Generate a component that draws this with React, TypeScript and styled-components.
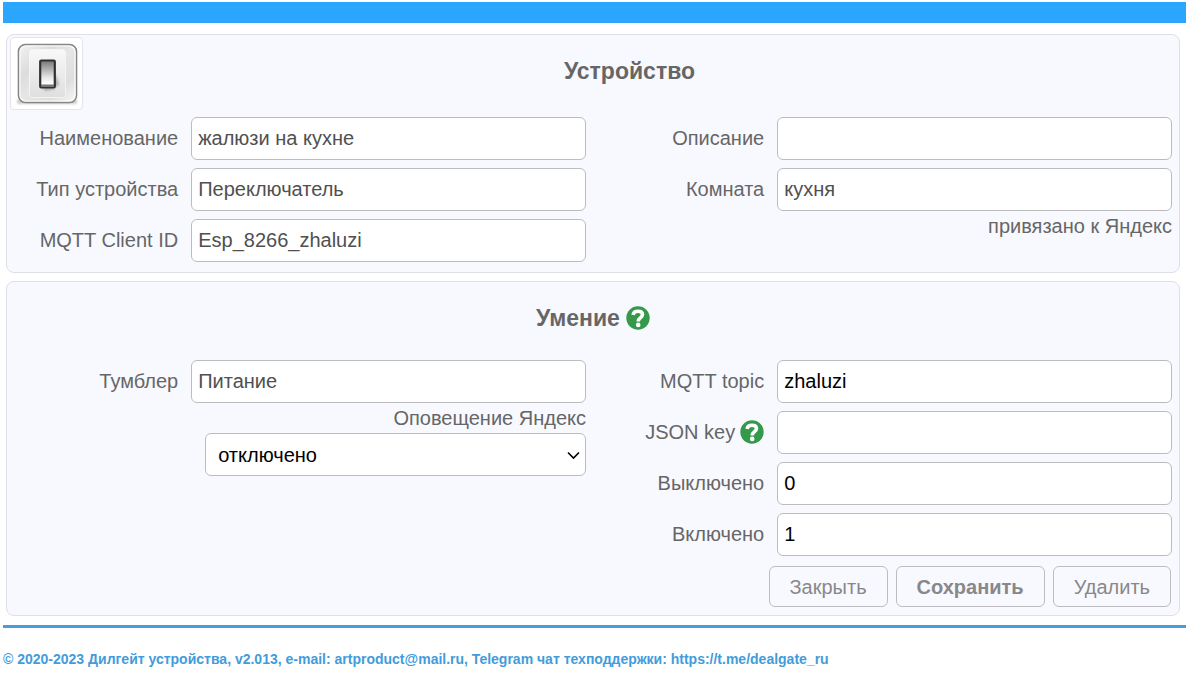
import React from "react";
import styled, { createGlobalStyle } from "styled-components";

const GlobalStyle = createGlobalStyle`
  *, *::before, *::after { box-sizing: border-box; }
  body {
    margin: 0;
    background: #fff;
    color: #666;
    font-family: "Liberation Sans", Arial, sans-serif;
    font-size: 20px;
    line-height: 24px;
  }
  input, select, button { font: inherit; }
`;

const Page = styled.div`
  padding: 2px 14px 0 3px;
`;

const TopBar = styled.header`
  height: 21px;
  background: #2ba6ff;
`;

const Main = styled.main`
  display: flex;
  flex-direction: column;
  gap: 8px;
  padding: 11px 6px 9px 3px;
  border-bottom: 3px solid #469fdc;
`;

const Panel = styled.section`
  border: 1px solid #dfdfe8;
  border-radius: 8px;
  background: #f8f9ff;
  padding-bottom: 8px;
`;

const DevicePanel = styled(Panel)`
  padding-bottom: 10px;
`;

const PanelHeader = styled.div`
  display: flex;
  align-items: flex-start;
  padding: 0 3px 6px;
`;

const Title = styled.h2`
  flex: 1;
  display: flex;
  align-items: center;
  justify-content: center;
  gap: 6px;
  margin: 0;
  font-size: 23px;
  line-height: 72px;
  font-weight: bold;
`;

const DeviceIcon = styled.div`
  width: 73px;
  height: 73px;
  margin: 2px 0 1px;
  border: 1px solid #e4e4ec;
  border-radius: 4px;
  background: #fff;
`;

const Columns = styled.div`
  display: grid;
  grid-template-columns: 1fr 1fr;
`;

const Column = styled.div`
  display: flex;
  flex-direction: column;
  padding: 0 7px 0 2px;
`;

const Fields = styled.div`
  display: grid;
  gap: 8px;
`;

const Row = styled.div`
  display: grid;
  grid-template-columns: 3fr 7fr;
  column-gap: 13px;
  align-items: center;
`;

const LabelCell = styled.div`
  display: flex;
  align-items: center;
  justify-content: flex-end;
  gap: 5px;
  padding-bottom: 2px;
  white-space: nowrap;
`;

const TextInput = styled.input`
  width: 100%;
  min-width: 0;
  height: 43px;
  padding: 0 6px;
  border: 1px solid #bcbcbf;
  border-radius: 6px;
  background: #fff;
  color: #000;
  &:read-only { color: #505050; }
`;

const Note = styled.div`
  line-height: 30px;
  text-align: right;
`;

const SelectBox = styled.div`
  position: relative;
  grid-column: 2;
  margin-left: 14px;
`;

const Select = styled.select`
  appearance: none;
  display: block;
  width: 100%;
  height: 43px;
  padding: 0 12px;
  border: 1px solid #bcbcbf;
  border-radius: 6px;
  background: #fff;
  color: #000;
`;

const Chevron = styled.svg`
  position: absolute;
  right: 6px;
  top: 18px;
  pointer-events: none;
`;

const HelpButton = styled.button`
  display: flex;
  padding: 0;
  border: 0;
  background: transparent;
`;

const Actions = styled.div`
  display: flex;
  justify-content: flex-end;
  gap: 8px;
  padding: 10px 1px 0 0;
`;

const ActionButton = styled.button<{ $strong?: boolean }>`
  height: 41px;
  padding: 0 20px;
  border: 1px solid #bcbcc2;
  border-radius: 6px;
  background: transparent;
  color: #888;
  font-weight: ${(p) => (p.$strong ? "bold" : "normal")};
`;

const Footer = styled.footer`
  padding-top: 19px;
  color: #419cdc;
  font-size: 14px;
  font-weight: bold;
  a { color: inherit; text-decoration: none; }
`;

function Help({ label }: { label: string }) {
  return (
    <HelpButton type="button" aria-label={label}>
      <svg width="24" height="24" viewBox="0 0 24 24" aria-hidden="true">
        <circle cx="12" cy="12" r="11.7" fill="#34994a" />
        <path
          d="M7.2 9 C7.4 6.3 9.2 5.2 12 5.2 C14.9 5.2 16.5 6.5 16.5 8.6 C16.5 11.6 12.2 11.6 12.2 15.4"
          fill="none"
          stroke="#fff"
          strokeWidth="3.6"
        />
        <circle cx="12.2" cy="18.9" r="2.3" fill="#fff" />
      </svg>
    </HelpButton>
  );
}

function Field({ id, label, value = "", readOnly, help }: {
  id: string;
  label: string;
  value?: string;
  readOnly?: boolean;
  help?: boolean;
}) {
  return (
    <Row>
      <LabelCell>
        <label htmlFor={id}>{label}</label>
        {help && <Help label="Справка" />}
      </LabelCell>
      <TextInput id={id} defaultValue={value} readOnly={readOnly} />
    </Row>
  );
}

function SwitchDrawing() {
  return (
    <svg width="71" height="71" viewBox="0 0 71 71" aria-hidden="true">
      <defs>
        <linearGradient id="plate" x1="0" y1="0" x2="1" y2="1">
          <stop offset="0" stopColor="#f4f4f4" />
          <stop offset=".3" stopColor="#dcdcdc" />
          <stop offset=".5" stopColor="#e6e6e6" />
          <stop offset=".75" stopColor="#dedede" />
          <stop offset="1" stopColor="#fafafa" />
        </linearGradient>
        <linearGradient id="inset" x1="0" y1="0" x2="0" y2="1">
          <stop offset="0" stopColor="#f8f8f8" />
          <stop offset="1" stopColor="#dfdfdf" />
        </linearGradient>
        <linearGradient id="rocker" x1="0" y1="0" x2="0" y2="1">
          <stop offset="0" stopColor="#777" />
          <stop offset=".25" stopColor="#a2a2a2" />
          <stop offset=".6" stopColor="#e2e2e2" />
          <stop offset=".85" stopColor="#fff" />
        </linearGradient>
        <filter id="soft" x="-30%" y="-50%" width="160%" height="200%">
          <feGaussianBlur stdDeviation="1.2" />
        </filter>
      </defs>
      <rect x="6" y="61" width="60" height="5" rx="2" fill="#ccc" filter="url(#soft)" />
      <rect x="7.5" y="6.5" width="58" height="58" rx="7" fill="url(#plate)" stroke="#868686" strokeWidth="1.6" />
      <rect x="9" y="8" width="55" height="55" rx="6" fill="none" stroke="#fafafa" strokeWidth="1.2" />
      <rect x="18.5" y="11.5" width="36" height="48" rx="3" fill="url(#inset)" stroke="#f4f4f4" />
      <path d="M32 50 L45 49 L48 46 L44 35 L44 51 L34 53 Z" fill="#aaa" filter="url(#soft)" />
      <rect x="29.2" y="22.5" width="14.6" height="27" rx="1" fill="url(#rocker)" stroke="#303030" strokeWidth="2.2" />
      <path d="M30 46.5 H43 V49 H30 Z" fill="#777" />
    </svg>
  );
}

export default function App() {
  return (
    <>
      <GlobalStyle />
      <Page>
        <TopBar />
        <Main>
          <DevicePanel>
            <PanelHeader>
              <DeviceIcon><SwitchDrawing /></DeviceIcon>
              <Title>Устройство</Title>
            </PanelHeader>
            <Columns>
              <Column>
                <Fields>
                  <Field id="name" label="Наименование" value="жалюзи на кухне" readOnly />
                  <Field id="type" label="Тип устройства" value="Переключатель" readOnly />
                  <Field id="client" label="MQTT Client ID" value="Esp_8266_zhaluzi" readOnly />
                </Fields>
              </Column>
              <Column>
                <Fields>
                  <Field id="description" label="Описание" readOnly />
                  <Field id="room" label="Комната" value="кухня" readOnly />
                </Fields>
                <Note>привязано к Яндекс</Note>
              </Column>
            </Columns>
          </DevicePanel>

          <Panel>
            <PanelHeader>
              <Title>Умение <Help label="Справка" /></Title>
            </PanelHeader>
            <Columns>
              <Column>
                <Field id="toggle" label="Тумблер" value="Питание" readOnly />
                <Note as="label" htmlFor="notify">Оповещение Яндекс</Note>
                <Row>
                  <SelectBox>
                    <Select id="notify" defaultValue="off">
                      <option value="off">отключено</option>
                      <option value="on">включено</option>
                    </Select>
                    <Chevron width="13" height="9" viewBox="0 0 13 9" aria-hidden="true">
                      <path d="M1 1.5 L6.5 7 L12 1.5" fill="none" stroke="#000" strokeWidth="1.6" />
                    </Chevron>
                  </SelectBox>
                </Row>
              </Column>
              <Column>
                <Fields>
                  <Field id="topic" label="MQTT topic" value="zhaluzi" />
                  <Field id="json" label="JSON key" help />
                  <Field id="off" label="Выключено" value="0" />
                  <Field id="on" label="Включено" value="1" />
                </Fields>
                <Actions>
                  <ActionButton type="button">Закрыть</ActionButton>
                  <ActionButton type="button" $strong>Сохранить</ActionButton>
                  <ActionButton type="button">Удалить</ActionButton>
                </Actions>
              </Column>
            </Columns>
          </Panel>
        </Main>
        <Footer>
          © 2020-2023 Дилгейт устройства, v2.013, e-mail:{" "}
          <a href="mailto:artproduct@mail.ru">artproduct@mail.ru</a>, Telegram чат техподдержки:{" "}
          <a href="https://t.me/dealgate_ru">https://t.me/dealgate_ru</a>
        </Footer>
      </Page>
    </>
  );
}
